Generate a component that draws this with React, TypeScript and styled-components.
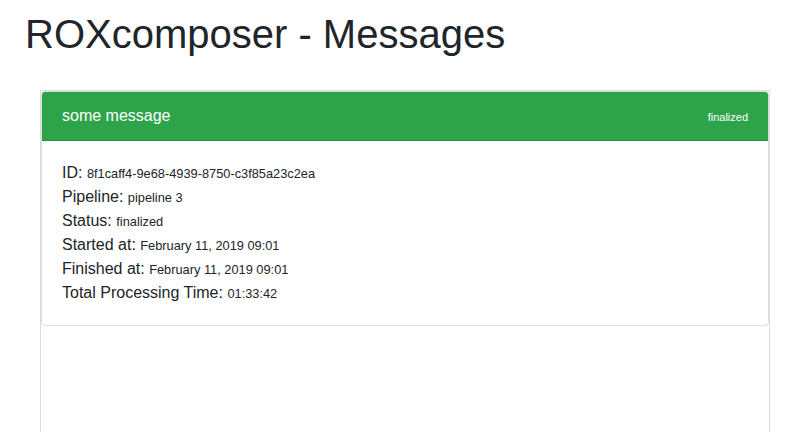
import { FC } from 'react';
import styled, { createGlobalStyle } from 'styled-components';

type Field = {
  label: string;
  value: string;
};

const fields: Field[] = [
  { label: 'ID:', value: '8f1caff4-9e68-4939-8750-c3f85a23c2ea' },
  { label: 'Pipeline:', value: 'pipeline 3' },
  { label: 'Status:', value: 'finalized' },
  { label: 'Started at:', value: 'February 11, 2019 09:01' },
  { label: 'Finished at:', value: 'February 11, 2019 09:01' },
  { label: 'Total Processing Time:', value: '01:33:42' },
];

const App: FC = () => {
  return (
    <>
      <GlobalStyle />
      <Page>
        <Title>ROXcomposer - Messages</Title>
        <MessageList>
          <Card>
            <CardHeader>
              <HeaderTitle>some message</HeaderTitle>
              <HeaderStatus>finalized</HeaderStatus>
            </CardHeader>
            <CardBody>
              {fields.map((field) => (
                <Row key={field.label}>
                  {field.label} <Value>{field.value}</Value>
                </Row>
              ))}
            </CardBody>
          </Card>
        </MessageList>
      </Page>
    </>
  );
};

export default App;

const GlobalStyle = createGlobalStyle`
  html, body {
    margin: 0;
    padding: 0;
    background: #fff;
    overflow: hidden;
  }
  body {
    font-family: 'Liberation Sans', Arial, sans-serif;
    color: #212529;
    font-size: 16px;
    line-height: 1.5;
  }
`;

const Page = styled.div`
  padding: 10px 24px 0 25px;
  height: 432px;
  box-sizing: border-box;
  display: flex;
  flex-direction: column;
`;

const Title = styled.h1`
  margin: 0 0 32px 0;
  font-size: 40px;
  font-weight: 400;
  line-height: 1.2;
  color: #212529;
`;

const MessageList = styled.div`
  flex: 1;
  margin-left: 15px;
  border: 1px solid #dcdcdc;
  border-bottom: none;
`;

const Card = styled.div`
  border: 1px solid #dfdfdf;
  border-radius: 4px;
  overflow: hidden;
`;

const CardHeader = styled.div`
  display: flex;
  align-items: center;
  justify-content: space-between;
  padding: 12px 20px;
  background: #2ea44a;
  border-bottom: 1px solid #28913f;
  color: #fff;
`;

const HeaderTitle = styled.span`
  font-size: 16px;
`;

const HeaderStatus = styled.small`
  font-size: 11px;
  padding-top: 2px;
`;

const CardBody = styled.div`
  padding: 20px;
`;

const Row = styled.div`
  font-size: 16px;
  line-height: 24px;
  height: 24px;
`;

const Value = styled.small`
  font-size: 12.8px;
  line-height: 1;
`;
